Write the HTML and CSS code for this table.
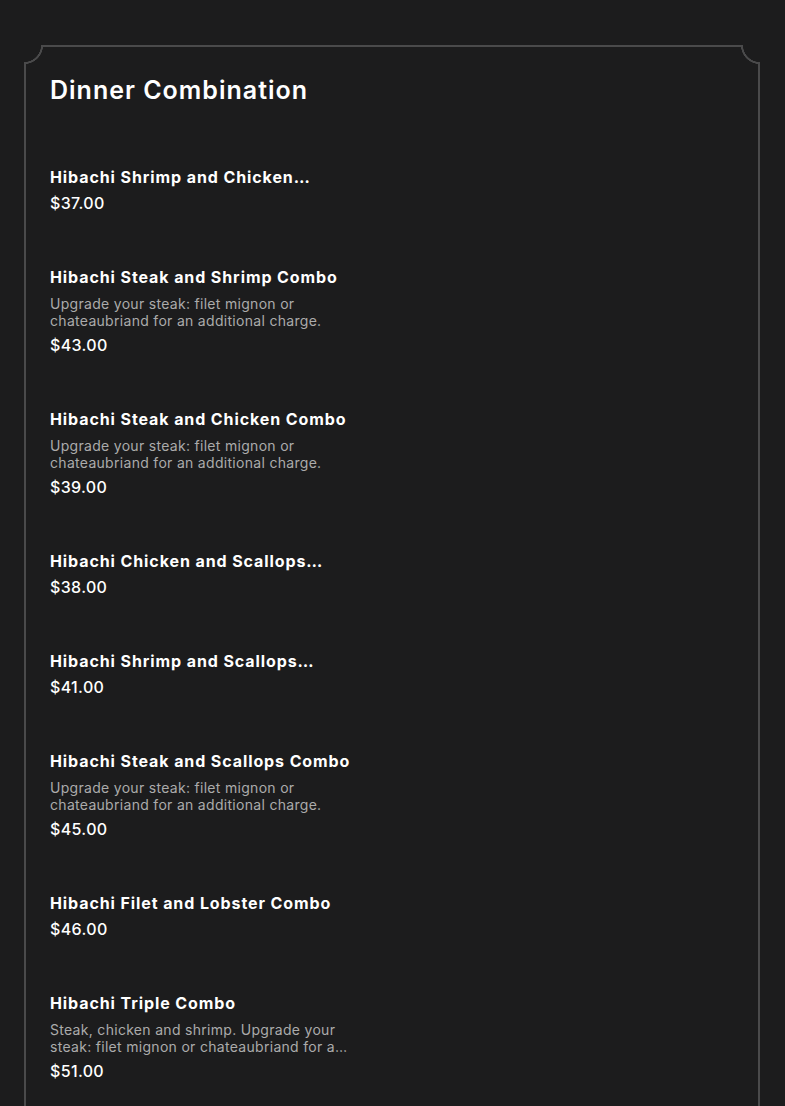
FILE: index.html
```html
<!DOCTYPE html>
<html lang="en">
<head>
<meta charset="utf-8">
<title>Dinner Combination</title>
<link rel="stylesheet" href="styles.css">
</head>
<body>
<main class="page">
  <section class="card">
    <h1 class="title">Dinner Combination</h1>
    <ul class="items">
      <li class="item">
        <h2 class="name">Hibachi Shrimp and Chicken Combo</h2>
        <p class="price">$37.00</p>
      </li>
      <li class="item">
        <h2 class="name">Hibachi Steak and Shrimp Combo</h2>
        <p class="desc">Upgrade your steak: filet mignon or chateaubriand for an additional charge.</p>
        <p class="price">$43.00</p>
      </li>
      <li class="item">
        <h2 class="name">Hibachi Steak and Chicken Combo</h2>
        <p class="desc">Upgrade your steak: filet mignon or chateaubriand for an additional charge.</p>
        <p class="price">$39.00</p>
      </li>
      <li class="item">
        <h2 class="name">Hibachi Chicken and Scallops Combo</h2>
        <p class="price">$38.00</p>
      </li>
      <li class="item">
        <h2 class="name">Hibachi Shrimp and Scallops Combo</h2>
        <p class="price">$41.00</p>
      </li>
      <li class="item">
        <h2 class="name">Hibachi Steak and Scallops Combo</h2>
        <p class="desc">Upgrade your steak: filet mignon or chateaubriand for an additional charge.</p>
        <p class="price">$45.00</p>
      </li>
      <li class="item">
        <h2 class="name">Hibachi Filet and Lobster Combo</h2>
        <p class="price">$46.00</p>
      </li>
      <li class="item">
        <h2 class="name">Hibachi Triple Combo</h2>
        <p class="desc">Steak, chicken and shrimp. Upgrade your steak: filet mignon or chateaubriand for an additional charge.</p>
        <p class="price">$51.00</p>
      </li>
    </ul>
  </section>
</main>
</body>
</html>
```

FILE: styles.css
```css
* { box-sizing: border-box; }

html, body {
  margin: 0;
  background: #1c1c1d;
}

body {
  font-family: Inter, "Liberation Sans", sans-serif;
  color: #ffffff;
}

.page {
  padding: 45px 25px 40px 24px;
}

.card {
  position: relative;
  padding: 29px 26px 60px 26px;
}

.card::before {
  content: "";
  position: absolute;
  inset: 0;
  border: 2px solid #4a4a4b;
  pointer-events: none;
  -webkit-mask:
    radial-gradient(circle at 0 0, transparent 19px, #000 19.5px) left top / 51% 51% no-repeat,
    radial-gradient(circle at 100% 0, transparent 19px, #000 19.5px) right top / 51% 51% no-repeat,
    radial-gradient(circle at 0 100%, transparent 19px, #000 19.5px) left bottom / 51% 51% no-repeat,
    radial-gradient(circle at 100% 100%, transparent 19px, #000 19.5px) right bottom / 51% 51% no-repeat;
  mask:
    radial-gradient(circle at 0 0, transparent 19px, #000 19.5px) left top / 51% 51% no-repeat,
    radial-gradient(circle at 100% 0, transparent 19px, #000 19.5px) right top / 51% 51% no-repeat,
    radial-gradient(circle at 0 100%, transparent 19px, #000 19.5px) left bottom / 51% 51% no-repeat,
    radial-gradient(circle at 100% 100%, transparent 19px, #000 19.5px) right bottom / 51% 51% no-repeat;
}

.card::after {
  content: "";
  position: absolute;
  inset: 0;
  pointer-events: none;
  background:
    radial-gradient(circle at 0 0, transparent 16.8px, #4a4a4b 17.3px, #4a4a4b 18.8px, transparent 19.3px) left top / 20px 20px no-repeat,
    radial-gradient(circle at 100% 0, transparent 16.8px, #4a4a4b 17.3px, #4a4a4b 18.8px, transparent 19.3px) right top / 20px 20px no-repeat,
    radial-gradient(circle at 0 100%, transparent 16.8px, #4a4a4b 17.3px, #4a4a4b 18.8px, transparent 19.3px) left bottom / 20px 20px no-repeat,
    radial-gradient(circle at 100% 100%, transparent 16.8px, #4a4a4b 17.3px, #4a4a4b 18.8px, transparent 19.3px) right bottom / 20px 20px no-repeat;
}

.title {
  margin: 0;
  font-size: 25px;
  line-height: 32px;
  font-weight: 600;
  letter-spacing: 1px;
}

.items {
  list-style: none;
  margin: 60px 0 0 0;
  padding: 0;
  display: flex;
  flex-direction: column;
  gap: 52px;
}

.item {
  width: 302px;
  display: flex;
  flex-direction: column;
  gap: 4px;
}

.name {
  margin: 0;
  font-size: 16px;
  line-height: 22px;
  font-weight: 700;
  letter-spacing: 0.9px;
  display: -webkit-box;
  -webkit-box-orient: vertical;
  -webkit-line-clamp: 1;
  overflow: hidden;
}

.desc {
  margin: 3px 0 1px 0;
  font-size: 14px;
  line-height: 17px;
  font-weight: 400;
  letter-spacing: 0.3px;
  color: #ababab;
  display: -webkit-box;
  -webkit-box-orient: vertical;
  -webkit-line-clamp: 2;
  overflow: hidden;
}

.price {
  margin: 0;
  font-size: 16px;
  line-height: 22px;
  font-weight: 500;
  letter-spacing: 0.35px;
}
```
